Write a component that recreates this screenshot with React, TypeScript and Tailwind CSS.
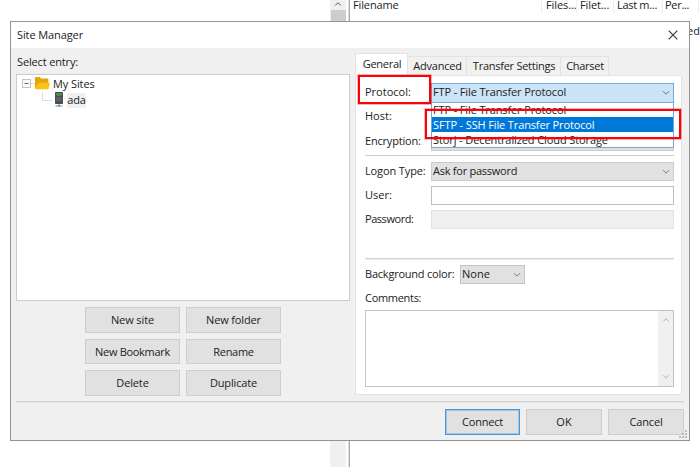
import React from "react";

function Chevron({ up = false, className = "" }: { up?: boolean; className?: string }) {
  return (
    <svg viewBox="0 0 8 6" className={"h-[6px] w-[8px] shrink-0 " + className} fill="none" stroke="currentColor" strokeWidth="1">
      <path d={up ? "M1.2 4.5 4 1.7 6.8 4.5" : "M1 1.2 4 4.2 7 1.2"} />
    </svg>
  );
}

function Button({ label, className = "" }: { label: string; className?: string }) {
  return (
    <button className={"flex items-center justify-center border bg-[#e1e1e1] pt-px " + className}>{label}</button>
  );
}

function Row({ label, className = "", children }: { label: string; className?: string; children?: React.ReactNode }) {
  return (
    <div className={"flex h-[19px] items-center " + className}>
      <span className="w-[66px] shrink-0">{label}</span>
      {children}
    </div>
  );
}

function Tab({ label, className }: { label: string; className: string }) {
  return (
    <div className={"flex h-[19px] items-center justify-center border-t border-r border-[#e2e2e2] bg-[#f1f1f1] " + className}>{label}</div>
  );
}

function Background() {
  return (
    <div className="flex h-full w-full bg-white">
      <div className="w-[330px]" />
      <div className="flex w-[16px] flex-col items-center bg-[#f0f0f0]">
        <Chevron up className="mt-px mb-[3px] text-[#555]" />
        <div className="h-[60px] w-[15px] bg-[#cdcdcd]" />
      </div>
      <div className="ml-[2px] w-[2px] border-r border-r-[#aaa] bg-[#dedede]" />
      <div className="flex flex-1 flex-col">
        <div className="flex h-[13px] leading-[10px]">
          <span className="w-[191px] pl-[3px] tracking-[-0.12px]">Filename</span>
          <span className="w-[35px] border-l border-[#eee] pl-[4px] tracking-[-0.1px]">Files...</span>
          <span className="w-[37px] border-l border-[#eee] pl-[3px] tracking-[-0.1px]">Filet...</span>
          <span className="w-[49px] border-l border-[#eee] pl-[3px] tracking-[-0.3px]">Last m...</span>
          <span className="w-[36px] border-l border-[#eee] pl-[2px] tracking-[-0.3px]">Per...</span>
          <span className="h-full border-l border-[#eee]" />
        </div>
        <div className="mt-[10px] flex justify-end leading-4">
          <span className="mr-0">ed</span>
        </div>
      </div>
    </div>
  );
}

function Tree() {
  return (
    <div className="h-[227px] w-[334px] border border-[#cbcdd0] bg-white pt-[1px] pl-[5px]">
      <div className="flex h-[16px] items-center">
        <svg className="h-[16px] w-[31px]" viewBox="0 0 31 16">
          <rect x=".5" y="3.5" width="8" height="8" fill="#fafafa" stroke="#c3c5c9" />
          <path d="M2.5 7.5h4" stroke="#5469a0" />
          <path d="M9 7.5h5" stroke="#ddd" />
          <path d="M13 1.8q0-.8.8-.8h4l1.4 1.5h6.2q1 0 1 1v8.5H13z" fill="#e5a50b" />
          <path d="M13 12.5 16.5 6.8H28l-1.2 5.7q-.2.8-1 .8h-12q-.8 0-.8-.8z" fill="#ffc018" />
        </svg>
        <span className="tracking-[-0.1px]">My Sites</span>
      </div>
      <div className="flex h-[16px] items-center pl-[20px]">
        <svg className="h-[16px] w-[25px]" viewBox="0 0 25 16">
          <path d="M.5 0v8.5H10" fill="none" stroke="#ddd" />
          <rect x="13" y="0" width="8" height="12" rx=".8" fill="#4d4d4d" />
          <path d="M14 1h6v2h-6z" fill="#777" />
          <path d="M15 1h4v3h-4z" fill="#309b3f" />
          <path d="M14.2 6h5.6M14.2 8h5.6" stroke="#777" />
          <path d="M17 12v3M13.5 14h7" stroke="#5c8db7" strokeWidth="1.2" />
        </svg>
        <span className="flex h-[15px] w-[19px] items-center justify-center bg-[#f0f0f0] tracking-[-0.15px]">ada</span>
      </div>
    </div>
  );
}

function SiteForm() {
  return (
    <div className="h-[320px] w-[327px] border border-[#e3e3e3] bg-white pt-[7px] pl-[9px]">
      <Row label="Protocol:">
        <div className="relative flex h-[20px] w-[243px] items-center justify-between border border-[#74a9dc] bg-[#cce4f7] pr-[3px] pl-[1px]">
          <span className="tracking-[-0.13px]">FTP - File Transfer Protocol</span>
          <Chevron className="text-[#60747f]" />
          <div className="absolute top-[18px] -left-px w-[243px] border border-[#74a9dc] bg-white tracking-[-0.13px]">
            <div className="h-[14px] pl-px leading-[13px]">FTP - File Transfer Protocol</div>
            <div className="h-[15px] bg-[#0078d7] pl-px leading-[15px] text-white">SFTP - SSH File Transfer Protocol</div>
            <div className="h-[15px] pl-px leading-[15px] tracking-[-0.1px]">Storj - Decentralized Cloud Storage</div>
          </div>
        </div>
      </Row>
      <Row label="Host:" className="mt-[5px]" />
      <Row label="Encryption:" className="mt-[6px] tracking-[-0.2px]">
        <div className="h-[18px] w-[243px] border border-[#ccc] bg-[#e1e1e1]" />
      </Row>
      <div className="mt-[4px] h-px w-[309px] bg-[#ccc]" />
      <Row label="Logon Type:" className="mt-[6px] tracking-[-0.12px]">
        <div className="flex h-[19px] w-[243px] items-center justify-between border border-[#ccc] bg-[#e1e1e1] pr-[3px] pl-[1px]">
          <span className="tracking-[-0.25px]">Ask for password</span>
          <Chevron className="text-[#777]" />
        </div>
      </Row>
      <Row label="User:" className="mt-[5px]">
        <div className="h-[19px] w-[243px] border border-[#bfbfbf]" />
      </Row>
      <Row label="Password:" className="mt-[5px] tracking-[-0.45px]">
        <div className="h-[19px] w-[243px] border border-[#e2e2e2] bg-[#f0f0f0]" />
      </Row>
      <div className="mt-[29px] h-[2px] w-[309px] border-t border-[#d2d2d2] bg-[#eee]" />
      <div className="mt-[5px] flex h-[19px] items-center">
        <span className="w-[95px] tracking-[-0.22px]">Background color:</span>
        <div className="flex h-[19px] w-[65px] items-center justify-between border border-[#c5c5c5] bg-[#e1e1e1] pr-[3px] pl-[1px]">
          <span>None</span>
          <Chevron className="text-[#777]" />
        </div>
      </div>
      <div className="mt-[6px] h-[15px] leading-[15px] tracking-[-0.3px]">Comments:</div>
      <div className="mt-[5px] flex h-[77px] w-[309px] justify-end border border-[#c3c3c3]">
        <div className="flex w-[15px] flex-col items-center justify-between bg-[#f0f0f0] py-[6px] text-[#b3b3b3]">
          <Chevron up />
          <Chevron />
        </div>
      </div>
    </div>
  );
}

function Dialog() {
  return (
    <div className="absolute top-[21px] left-[10px] flex h-[420px] w-[680px] flex-col border border-[#939393] bg-[#f0f0f0]">
      <div className="flex h-[26px] shrink-0 items-center justify-between bg-white pr-[11px] pl-[6px]">
        <span className="pt-px tracking-[-0.1px]">Site Manager</span>
        <svg className="h-[10px] w-[10px]" viewBox="0 0 10 10" fill="none" stroke="#333" strokeWidth="1.1">
          <path d="M.7.7 9.3 9.3M9.3.7.7 9.3" />
        </svg>
      </div>
      <div className="flex h-[353px] shrink-0 pl-[5px]">
        <div className="w-[339px]">
          <div className="h-[26px] pt-[6px] pl-px leading-[15px] tracking-[-0.15px]">Select entry:</div>
          <Tree />
          <div className="mt-[6px] ml-[69px] grid w-[196px] grid-cols-2 gap-x-[6px] gap-y-[6px]">
            <Button label="New site" className="h-[26px] border-[#cdcdcd] tracking-[-0.1px]" />
            <Button label="New folder" className="h-[26px] border-[#cdcdcd] tracking-[-0.15px]" />
            <Button label="New Bookmark" className="h-[25px] border-[#cdcdcd] tracking-[-0.3px]" />
            <Button label="Rename" className="h-[25px] border-[#cdcdcd] tracking-[-0.3px]" />
            <Button label="Delete" className="h-[26px] border-[#cdcdcd] tracking-[-0.15px]" />
            <Button label="Duplicate" className="h-[26px] border-[#cdcdcd] tracking-[-0.15px]" />
          </div>
        </div>
        <div className="flex flex-col">
          <div className="mt-[5px] flex h-[22px] items-end">
            <div className="flex h-[22px] w-[53px] items-center justify-center border border-b-0 border-[#e3e3e3] bg-white pl-px tracking-[-0.3px]">General</div>
            <Tab label="Advanced" className="w-[59px] pl-px tracking-[-0.2px]" />
            <Tab label="Transfer Settings" className="w-[94px] pl-px tracking-[-0.26px]" />
            <Tab label="Charset" className="w-[48px] pl-px tracking-[-0.3px]" />
          </div>
          <SiteForm />
        </div>
      </div>
      <div className="mx-[5px] h-[2px] shrink-0 border-t border-[#d2d2d2] bg-[#e4e4e4]" />
      <div className="mt-[6px] flex justify-end gap-[6px] pr-[5px]">
        <Button label="Connect" className="h-[26px] w-[75px] border-[#5094d3] tracking-[-0.2px] ring-1 ring-inset ring-[#9cc7ea]" />
        <Button label="OK" className="h-[26px] w-[76px] border-[#cdcdcd]" />
        <Button label="Cancel" className="h-[26px] w-[76px] border-[#cdcdcd] tracking-[-0.15px]" />
      </div>
      <svg className="absolute right-[1px] bottom-[1px] h-[9px] w-[9px]" viewBox="0 0 9 9" fill="#bcbcbc">
        <path d="M6 0h2v2H6zM3 3h2v2H3zM6 3h2v2H6zM0 6h2v2H0zM3 6h2v2H3zM6 6h2v2H6z" />
      </svg>
    </div>
  );
}

export default function App() {
  return (
    <div className="relative h-[467px] w-[700px] overflow-hidden bg-white font-['Open_Sans','Noto_Sans',sans-serif] text-[11px] whitespace-nowrap text-[#222]">
      <Background />
      <Dialog />
      <div className="absolute top-[75px] left-[358px] h-[29px] w-[73px] border-[2.5px] border-[#fb0207] ring-[0.5px] ring-[#fb0207]/60" />
      <div className="absolute top-[109px] left-[425px] h-[30px] w-[256px] border-2 border-[#fb0207] ring-[0.5px] ring-[#fb0207]/60" />
    </div>
  );
}
